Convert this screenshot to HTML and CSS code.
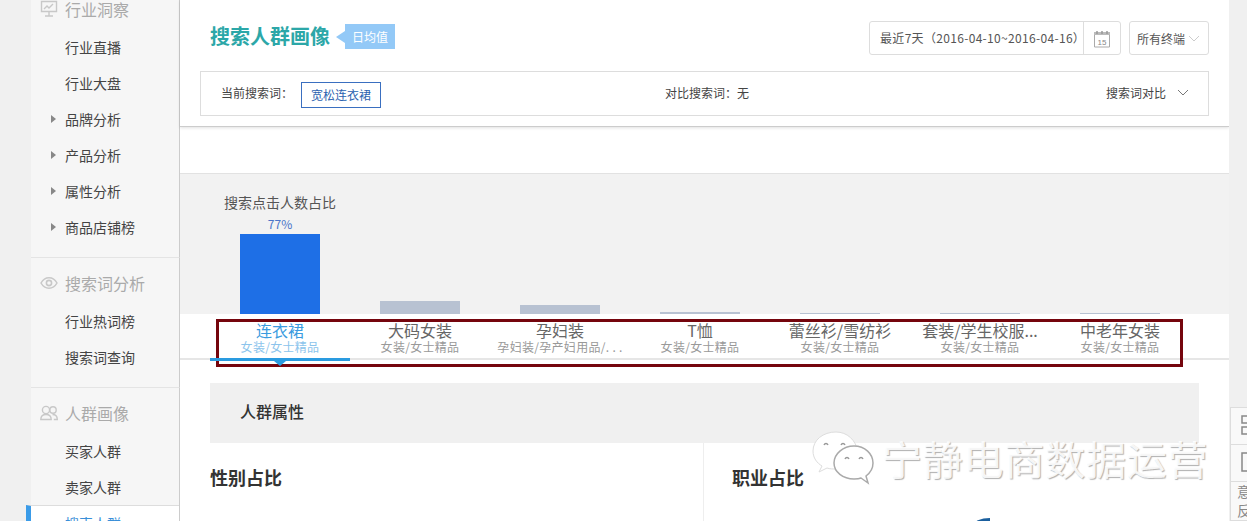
FILE: index.html
```html
<!DOCTYPE html>
<html lang="zh">
<head>
<meta charset="utf-8">
<title>搜索人群画像</title>
<link rel="stylesheet" href="styles.css">
</head>
<body>
<div class="page">
  <aside class="sidebar">
    <section class="nav-group nav-first">
      <h3 class="nav-head"><svg class="nav-icon" viewBox="0 0 18 18"><path d="M1.500 1.500h15v10h-15zM9 11.500v4M5 16h8M4 9l3-3 2 2 4-4" fill="none" stroke="#c8c8c8" stroke-width="1.400"/></svg>行业洞察</h3>
      <a class="nav-item">行业直播</a>
      <a class="nav-item">行业大盘</a>
      <a class="nav-item has-arrow">品牌分析</a>
      <a class="nav-item has-arrow">产品分析</a>
      <a class="nav-item has-arrow">属性分析</a>
      <a class="nav-item has-arrow">商品店铺榜</a>
    </section>
    <section class="nav-group">
      <h3 class="nav-head"><svg class="nav-icon" viewBox="0 0 18 18"><path d="M1 9c2-3.600 4.800-5.200 8-5.200s6 1.600 8 5.200c-2 3.600-4.800 5.200-8 5.200S3 12.600 1 9z" fill="none" stroke="#c8c8c8" stroke-width="1.500"/><circle cx="9" cy="9" r="2.600" fill="none" stroke="#c8c8c8" stroke-width="1.600"/></svg>搜索词分析</h3>
      <a class="nav-item">行业热词榜</a>
      <a class="nav-item">搜索词查询</a>
    </section>
    <section class="nav-group">
      <h3 class="nav-head"><svg class="nav-icon" viewBox="0 0 18 18"><circle cx="6" cy="6" r="3.600" fill="none" stroke="#c8c8c8" stroke-width="1.400"/><circle cx="13" cy="6" r="3.200" fill="none" stroke="#c8c8c8" stroke-width="1.400"/><path d="M.8 15.500c0-3 2-5 5.200-5s5.200 2 5.200 5zM12.500 10.500c3 0 4.800 2 4.800 5h-3.500" fill="none" stroke="#c8c8c8" stroke-width="1.400"/></svg>人群画像</h3>
      <a class="nav-item">买家人群</a>
      <a class="nav-item">卖家人群</a>
      <a class="nav-item is-active">搜索人群</a>
    </section>
  </aside>

  <main class="main">
    <header class="top-card">
      <div class="title-row">
        <h1 class="page-title">搜索人群画像</h1>
        <span class="badge">日均值</span>
        <div class="filters">
          <div class="date-box">
            <span class="date-text">最近7天（2016-04-10~2016-04-16）</span>
            <span class="date-cal"><svg width="18" height="18" viewBox="0 0 18 18"><path d="M1.500 4h15v13h-15z" fill="none" stroke="#aaa"/><path d="M1 2h16v3H1z" fill="#bbb"/><path d="M4 1v3M9 1v3M14 1v3" stroke="#999" stroke-width="1.500"/><text x="9" y="14.500" class="cal-num">15</text></svg></span>
          </div>
          <div class="select-box">所有终端<svg class="chev" width="12" height="7" viewBox="0 0 12 7"><path d="M1 1l5 5 5-5" fill="none" stroke="#ccc"/></svg></div>
        </div>
      </div>
      <div class="search-bar">
        <div class="search-current">
          <span>当前搜索词：</span>
          <span class="tag">宽松连衣裙</span>
        </div>
        <span class="search-compare">对比搜索词：无</span>
        <span class="search-toggle">搜索词对比<svg class="chev-dark" width="12" height="7" viewBox="0 0 12 7"><path d="M1 1l5 5 5-5" fill="none" stroke="#777"/></svg></span>
      </div>
    </header>

    <div class="spacer"></div>

    <section class="chart-band">
      <div class="chart-label">搜索点击人数占比</div>
      <div class="bars">
        <div class="bar-col"><span class="bar-value">77%</span><i class="bar bar-main"></i></div>
        <div class="bar-col"><i class="bar bar-h13"></i></div>
        <div class="bar-col"><i class="bar bar-h9"></i></div>
        <div class="bar-col"><i class="bar bar-h2"></i></div>
        <div class="bar-col"><i class="bar bar-h1"></i></div>
        <div class="bar-col"><i class="bar bar-h1"></i></div>
        <div class="bar-col"><i class="bar bar-h1"></i></div>
      </div>
    </section>

    <nav class="tabs">
      <div class="tab is-active"><b>连衣裙</b><small>女装/女士精品</small></div>
      <div class="tab"><b>大码女装</b><small>女装/女士精品</small></div>
      <div class="tab"><b>孕妇装</b><small>孕妇装/孕产妇用品/. . .</small></div>
      <div class="tab"><b>T恤</b><small>女装/女士精品</small></div>
      <div class="tab"><b>蕾丝衫/雪纺衫</b><small>女装/女士精品</small></div>
      <div class="tab"><b>套装/学生校服...</b><small>女装/女士精品</small></div>
      <div class="tab"><b>中老年女装</b><small>女装/女士精品</small></div>
    </nav>

    <section class="attrs">
      <h2 class="attrs-head">人群属性</h2>
      <div class="attrs-cols">
        <div class="attr-col attr-left"><h3 class="attr-title">性别占比</h3></div>
        <div class="attr-col attr-right"><h3 class="attr-title">职业占比</h3><i class="pie-tip"></i></div>
      </div>
    </section>
  </main>

  <aside class="rail">
    <div class="rail-panel">
      <div class="rail-btn"><svg width="16" height="20" viewBox="0 0 16 20"><path d="M1 1h14v7H1zM1 12h14v7H1z" fill="none" stroke="#888" stroke-width="1.500"/></svg></div>
      <div class="rail-btn"><svg width="16" height="20" viewBox="0 0 16 20"><path d="M1 1h14v18H1z" fill="none" stroke="#888" stroke-width="1.500"/></svg></div>
      <div class="rail-text">意见反馈</div>
    </div>
  </aside>

  <div class="annotation"></div>
  <div class="watermark">
    <svg class="wm-icon" width="62" height="54" viewBox="0 0 62 54">
      <path d="M24 1C11 1 1 9 1 20c0 7 4 12 9 15l-3 6 8-4c3 1 6 1 9 1 1-10 10-18 22-17C44 9 35 1 24 1z" fill="#fff" stroke="#ddd"/>
      <path d="M42 15c-11 0-20 8-20 17s9 16 20 16c2 0 5 0 7-1l7 5-2-7c4-3 7-8 7-13 0-9-8-17-19-17z" fill="#fff" stroke="#aaa" stroke-width="1.500"/>
      <path d="M12 14c1-2 3-2 4 0M29 14c1-2 3-2 4 0M33 28c1-2 3-2 4 0M47 28c1-2 3-2 4 0" fill="none" stroke="#999" stroke-width="1.500"/>
    </svg>
    <span class="wm-text">宁静电商数据运营</span>
  </div>
</div>
</body>
</html>
```
FILE: styles.css
```css
* { box-sizing: border-box; }
html, body { margin: 0; padding: 0; }
body { font-family: "Noto Sans CJK SC", "Liberation Sans", sans-serif; color: #444; background: #eee; }
h1, h2, h3 { margin: 0; font-weight: normal; }
.page { position: relative; width: 1247px; height: 521px; overflow: hidden; display: flex; background: #f0f0f0; }

/* sidebar */
.sidebar { width: 180px; padding-left: 31px; flex: none; }
.nav-group { width: 149px; background: #f6f6f6; border-right: 1px solid #ccc; border-bottom: 1px solid #e4e4e4; padding-bottom: 11px; }
.nav-group:last-child { border-bottom: 0; padding-bottom: 0; }
.nav-first { margin-top: -12px; }
.nav-head { height: 46px; padding: 3px 0 0 9px; display: flex; align-items: center; font-size: 16px; color: #aaa; }
.nav-first .nav-head { height: 42px; padding-top: 0; }
.nav-group + .nav-group .nav-head { margin-top: 0; }
.nav-icon { width: 18px; height: 18px; margin-right: 7px; flex: none; }
.nav-item { display: block; position: relative; height: 36px; line-height: 34px; font-size: 14px; color: #444; padding-left: 34px; }
.has-arrow::before { content: ""; position: absolute; left: 20px; top: 13px; border-left: 5px solid #888; border-top: 4px solid transparent; border-bottom: 4px solid transparent; }
.is-active.nav-item { margin: -1px 0 0 -5px; padding-left: 34px; width: 153px; background: #fff; color: #3a8fd8; border-top: 1px solid #ddd; border-left: 5px solid #3a9be8; }

/* main */
.main { width: 1049px; flex: none; background: #fff; display: flex; flex-direction: column; }
.main > * { flex: none; }
.top-card { height: 127px; padding: 21px 20px 0 20px; border-bottom: 1px solid #ccc; box-shadow: 0 1px 3px rgba(0,0,0,.12); position: relative; }
.title-row { display: flex; align-items: flex-start; height: 50px; padding-left: 10px; }
.page-title { font-size: 20px; font-weight: 700; color: #2ca7a8; line-height: 30px; }
.badge { position: relative; margin: 3px 0 0 15px; width: 50px; height: 25px; line-height: 25px; text-align: center; font-size: 12px; color: #fff; background: #93c9f7; }
.badge::before { content: ""; position: absolute; left: -9px; top: 7px; border-right: 9px solid #93c9f7; border-top: 6px solid transparent; border-bottom: 6px solid transparent; }
.filters { margin-left: auto; display: flex; gap: 8px; }
.date-box { display: flex; width: 252px; height: 34px; border: 1px solid #ddd; border-radius: 3px; font-size: 12px; line-height: 32px; color: #555; }
.date-text { width: 214px; padding-left: 10px; white-space: nowrap; border-right: 1px solid #ddd; letter-spacing: .32px; }
.date-cal { flex: 1; display: flex; align-items: center; justify-content: center; padding-top: 2px; }
.cal-num { font-size: 8px; fill: #888; text-anchor: middle; font-family: "Liberation Sans", sans-serif; }
.select-box { display: flex; align-items: center; width: 80px; height: 34px; border: 1px solid #ddd; border-radius: 3px; padding-left: 7px; font-size: 12px; color: #555; }
.chev { margin-left: 3px; }
.search-bar { display: flex; align-items: center; height: 45px; border: 1px solid #ddd; font-size: 12px; color: #444; padding: 0 19px 2px 20px; position: relative; }
.search-current { display: flex; align-items: center; width: 444px; }
.tag { margin-left: 8px; width: 80px; height: 26px; line-height: 24px; margin-top: 4px; text-align: center; border: 1px solid #3a6fc0; color: #2b62b0; }
.search-compare { flex: 1; }
.search-toggle { display: flex; align-items: center; }
.chev-dark { margin-left: 11px; }

.spacer { height: 47px; border-bottom: 1px solid #e2e2e2; }

/* chart */
.chart-band { height: 140px; background: #f2f2f2; padding-top: 19px; }
.chart-label { font-size: 14px; line-height: 18px; color: #555; padding-left: 44px; }
.bars { display: flex; height: 103px; margin-left: 30px; width: 980px; }
.bar-col { width: 140px; display: flex; flex-direction: column; justify-content: flex-end; align-items: center; }
.bar { display: block; width: 80px; background: #b8c2d2; }
.bar-main { height: 80px; background: #1e6fe6; }
.bar-h13 { height: 13px; }
.bar-h9 { height: 9px; }
.bar-h2 { height: 2px; }
.bar-h1 { height: 1px; }
.bar-value { font-size: 12px; line-height: 20px; color: #4a74c8; }

/* tabs */
.tabs { height: 47px; padding-left: 30px; display: flex; position: relative; }
.tabs::after { content: ""; position: absolute; left: 0; right: 0; top: 44px; height: 2px; background: #e6e6e6; }
.tab { width: 140px; text-align: center; position: relative; }
.tab b { display: block; font-weight: normal; font-size: 16px; line-height: 20px; margin-top: 6px; color: #666; white-space: nowrap; }
.tab small { display: block; font-size: 12px; line-height: 14px; letter-spacing: .3px; color: #999; white-space: nowrap; }
.tab.is-active b { color: #3a9be0; }
.tab.is-active small { color: #8cc4ec; }
.tab.is-active::after { content: ""; position: absolute; z-index: 1; left: 0; right: 0; top: 44px; height: 3px; background: #2a9be0; }
.tab.is-active::before { content: ""; position: absolute; z-index: 1; left: 64px; top: 47px; border-top: 5px solid #2a9be0; border-left: 6px solid transparent; border-right: 6px solid transparent; }

/* attributes */
.attrs { padding: 22px 30px 0; }
.attrs-head { height: 60px; line-height: 56px; background: #f0f0f0; padding-left: 30px; font-size: 16px; font-weight: 500; color: #333; }
.attrs-cols { display: flex; height: 100px; }
.attr-col { position: relative; padding-top: 21px; }
.attr-left { width: 494px; border-right: 1px solid #eee; }
.attr-right { flex: 1; padding-left: 28px; }
.attr-title { font-size: 18px; line-height: 26px; font-weight: 700; color: #333; }
.pie-tip { position: absolute; left: 269px; top: 75px; width: 17px; height: 8px; background: #1a5f9e; border-radius: 100% 0 0 0; }

/* right rail */
.rail { flex: 1; position: relative; background: #f0f0f0; }
.rail-panel { position: absolute; left: 1px; top: 407px; width: 36px; background: #f9f9f9; border: 1px solid #ddd; }
.rail-btn { height: 37px; padding: 7px 0 0 10px; border-bottom: 1px solid #ddd; }
.rail-text { width: 28px; box-sizing: content-box; padding-left: 6px; font-size: 14px; line-height: 19px; color: #888; word-break: break-all; }

/* overlays */
.annotation { position: absolute; left: 216px; top: 319px; width: 967px; height: 48px; border: 3px solid #75050d; pointer-events: none; }
.watermark { position: absolute; left: 812px; top: 431px; display: flex; align-items: center; gap: 8px; }
.wm-text { font-size: 40px; line-height: 54px; letter-spacing: .8px; color: rgba(255,255,255,.9); text-shadow: 1px 1px 1px #b0b0b0; white-space: nowrap; }
```
